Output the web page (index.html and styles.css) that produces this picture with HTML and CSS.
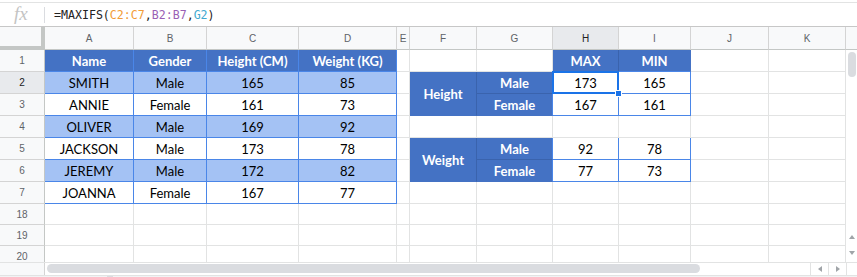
FILE: index.html
```html
<!DOCTYPE html>
<html lang="en">
<head>
  <meta charset="UTF-8">
  <title>MAXIFS</title>
  <link rel="stylesheet" href="styles.css">
</head>
<body>
  <!-- Barra de fórmula -->
  <div class="formula-bar">
    <span class="fx">fx</span>
    <span class="fx-sep"></span>
    <span class="formula">=MAXIFS(<span class="ref-c">C2:C7</span>,<span class="ref-b">B2:B7</span>,<span class="ref-g">G2</span>)</span>
  </div>

  <div class="sheet">
    <!-- Cabeçalhos das colunas -->
    <div class="corner"></div>
    <div class="hd">A</div>
    <div class="hd">B</div>
    <div class="hd">C</div>
    <div class="hd">D</div>
    <div class="hd">E</div>
    <div class="hd">F</div>
    <div class="hd">G</div>
    <div class="hd active">H</div>
    <div class="hd">I</div>
    <div class="hd">J</div>
    <div class="hd">K</div>
    <div class="hd sb-head"></div>

    <!-- Barra de rolagem vertical -->
    <div class="vscroll">
      <div class="vthumb"></div>
      <div class="varrows">
        <div class="varrow"><span class="tri-up"></span></div>
        <div class="varrow"><span class="tri-down"></span></div>
      </div>
    </div>

    <!-- Linha 1 -->
    <div class="rh">1</div>
    <div class="cell t1 head">Name</div>
    <div class="cell t1 head">Gender</div>
    <div class="cell t1 head">Height (CM)</div>
    <div class="cell t1 head">Weight (KG)</div>
    <div class="cell"></div>
    <div class="cell"></div>
    <div class="cell"></div>
    <div class="cell t2 head h-max">MAX</div>
    <div class="cell t2 head h-min">MIN</div>
    <div class="cell"></div>
    <div class="cell"></div>

    <!-- Linha 2 -->
    <div class="rh active">2</div>
    <div class="cell t1 alt">SMITH</div>
    <div class="cell t1 alt">Male</div>
    <div class="cell t1 alt">165</div>
    <div class="cell t1 alt">85</div>
    <div class="cell"></div>
    <div class="cell t2 head side">Height</div>
    <div class="cell t2 head sub-top">Male</div>
    <div class="cell t2 val selected">173<span class="sel"></span><span class="handle"></span></div>
    <div class="cell t2 val">165</div>
    <div class="cell"></div>
    <div class="cell"></div>

    <!-- Linha 3 -->
    <div class="rh">3</div>
    <div class="cell t1">ANNIE</div>
    <div class="cell t1">Female</div>
    <div class="cell t1">161</div>
    <div class="cell t1">73</div>
    <div class="cell"></div>
    <div class="cell t2 head sub-bottom">Female</div>
    <div class="cell t2 val">167</div>
    <div class="cell t2 val">161</div>
    <div class="cell"></div>
    <div class="cell"></div>

    <!-- Linha 4 -->
    <div class="rh">4</div>
    <div class="cell t1 alt">OLIVER</div>
    <div class="cell t1 alt">Male</div>
    <div class="cell t1 alt">169</div>
    <div class="cell t1 alt">92</div>
    <div class="cell"></div>
    <div class="cell"></div>
    <div class="cell"></div>
    <div class="cell"></div>
    <div class="cell"></div>
    <div class="cell"></div>
    <div class="cell"></div>

    <!-- Linha 5 -->
    <div class="rh">5</div>
    <div class="cell t1">JACKSON</div>
    <div class="cell t1">Male</div>
    <div class="cell t1">173</div>
    <div class="cell t1">78</div>
    <div class="cell"></div>
    <div class="cell t2 head side">Weight</div>
    <div class="cell t2 head sub-top">Male</div>
    <div class="cell t2 val">92</div>
    <div class="cell t2 val">78</div>
    <div class="cell"></div>
    <div class="cell"></div>

    <!-- Linha 6 -->
    <div class="rh">6</div>
    <div class="cell t1 alt">JEREMY</div>
    <div class="cell t1 alt">Male</div>
    <div class="cell t1 alt">172</div>
    <div class="cell t1 alt">82</div>
    <div class="cell"></div>
    <div class="cell t2 head sub-bottom">Female</div>
    <div class="cell t2 val">77</div>
    <div class="cell t2 val">73</div>
    <div class="cell"></div>
    <div class="cell"></div>

    <!-- Linha 7 -->
    <div class="rh">7</div>
    <div class="cell t1">JOANNA</div>
    <div class="cell t1">Female</div>
    <div class="cell t1">167</div>
    <div class="cell t1">77</div>
    <div class="cell"></div>
    <div class="cell"></div>
    <div class="cell"></div>
    <div class="cell"></div>
    <div class="cell"></div>
    <div class="cell"></div>
    <div class="cell"></div>

    <!-- Linhas 18 a 20 -->
    <div class="rh">18</div>
    <div class="cell"></div><div class="cell"></div><div class="cell"></div><div class="cell"></div>
    <div class="cell"></div><div class="cell"></div><div class="cell"></div><div class="cell"></div>
    <div class="cell"></div><div class="cell"></div><div class="cell"></div>

    <div class="rh">19</div>
    <div class="cell"></div><div class="cell"></div><div class="cell"></div><div class="cell"></div>
    <div class="cell"></div><div class="cell"></div><div class="cell"></div><div class="cell"></div>
    <div class="cell"></div><div class="cell"></div><div class="cell"></div>

    <div class="rh last">20</div>
    <div class="cell last"></div><div class="cell last"></div><div class="cell last"></div><div class="cell last"></div>
    <div class="cell last"></div><div class="cell last"></div><div class="cell last"></div><div class="cell last"></div>
    <div class="cell last"></div><div class="cell last"></div><div class="cell last"></div>
  </div>

  <!-- Barra de rolagem horizontal -->
  <div class="hscroll">
    <div class="hs-left"></div>
    <div class="hs-track"><div class="hthumb"></div></div>
    <div class="hs-btn"><span class="tri-left"></span></div>
    <div class="hs-btn"><span class="tri-right"></span></div>
    <div class="hs-corner"></div>
  </div>

  <div class="tabs-strip">
    <span class="tab-a"></span><span class="tab-b"></span><span class="tab-c"></span>
  </div>
</body>
</html>
```

FILE: styles.css
```css
/* Layout geral */
body {
  margin: 0;
  background: #fff;
  font-family: Lato, "Liberation Sans", sans-serif;
  overflow: hidden;
}

/* Barra de fórmula */
.formula-bar {
  margin-top: 2px;
  height: 23px;
  border-top: 1px solid #e2e3e3;
  border-bottom: 1px solid #c7c7c7;
  display: flex;
  align-items: center;
}

.fx {
  width: 44px;
  padding-left: 14px;
  box-sizing: border-box;
  font-family: "Liberation Serif", serif;
  font-style: italic;
  font-size: 19px;
  color: #c4c4c4;
  line-height: 1;
  margin-top: -2px;
}

.fx-sep {
  width: 1px;
  height: 16px;
  background: #dadce0;
  margin-right: 9px;
}

.formula {
  font-family: "DejaVu Sans Mono", monospace;
  font-size: 11.6px;
  color: #222;
}

.ref-c { color: #f29c36; }
.ref-b { color: #9a5fb5; }
.ref-g { color: #3fa9d0; }

/* Grade da planilha */
.sheet {
  display: grid;
  grid-template-columns: 45px 89px 73px 92px 98px 13px 67px 76px 66px 72px 78px 77px 11px;
  grid-template-rows: 23px repeat(7, 22px) 21px 21px 16px;
  overflow: hidden;
}

.sheet > div {
  box-sizing: border-box;
}

.corner {
  background: #f8f9fa;
  border-right: 4px solid #c4c7c5;
  border-bottom: 4px solid #c4c7c5;
}

.hd {
  background: #f8f9fa;
  border-right: 1px solid #d4d4d4;
  border-bottom: 1px solid #c4c7c5;
  font-family: "Liberation Sans", Arial, sans-serif;
  font-size: 10px;
  color: #5f6368;
  text-align: center;
  padding-top: 1px;
  line-height: 21px;
}

.hd.active {
  background: #e8eaed;
  color: #202124;
}

.sb-head {
  border-right: none;
}

.rh {
  background: #f8f9fa;
  border-right: 1px solid #c4c7c5;
  border-bottom: 1px solid #d4d4d4;
  font-family: "Liberation Sans", Arial, sans-serif;
  font-size: 10px;
  color: #5f6368;
  text-align: center;
  padding-top: 1px;
  line-height: 20px;
}

.rh.active {
  background: #e8eaed;
  color: #202124;
}

.cell {
  border-right: 1px solid #e2e3e3;
  border-bottom: 1px solid #e2e3e3;
  font-size: 13px;
  color: #000;
  text-align: center;
  padding-top: 2px;
  line-height: 19px;
  white-space: nowrap;
}

.rh.last, .cell.last {
  border-bottom: none;
}

/* Tabela de dados (A1:D7) */
.t1 {
  border-color: #4a86e8;
}

.head {
  background: #4472c4;
  color: #fff;
  font-weight: bold;
}

.alt {
  background: #a4c2f4;
}

/* Tabela de resumo (F1:I6) */
.h-max {
  border-right-color: #3a63ad;
  border-bottom-color: #4a86e8;
}

.h-min {
  border-right-color: #4472c4;
  border-bottom-color: #4a86e8;
}

.side {
  grid-row: span 2;
  border-right-color: #3a63ad;
  border-bottom-color: #4472c4;
  line-height: 41px;
}

.sub-top {
  border-right-color: #4a86e8;
  border-bottom-color: #3a63ad;
}

.sub-bottom {
  border-right-color: #4a86e8;
  border-bottom-color: #4472c4;
}

.val {
  border-color: #4a86e8;
}

/* Célula selecionada */
.selected {
  position: relative;
}

.sel {
  position: absolute;
  top: -1px;
  left: -1px;
  right: -1px;
  bottom: -1px;
  border: 2px solid #1a73e8;
}

.handle {
  position: absolute;
  right: -4px;
  bottom: -4px;
  width: 5px;
  height: 5px;
  background: #1a73e8;
  border: 1px solid #fff;
}

/* Barra de rolagem vertical */
.vscroll {
  grid-column: 13;
  grid-row: 2 / -1;
  display: flex;
  flex-direction: column;
  justify-content: space-between;
  background: #fff;
}

.vthumb {
  width: 8px;
  height: 25px;
  margin: 2px 0 0 2px;
  border-radius: 4px;
  background: #dadce0;
}

.varrows {
  margin-bottom: 1px;
}

.varrow {
  height: 16px;
  display: flex;
  align-items: center;
  justify-content: center;
}

.tri-up, .tri-down, .tri-left, .tri-right {
  width: 0;
  height: 0;
  border: 3px solid transparent;
}

.tri-up { border-bottom: 4px solid #a0a4a8; border-top: none; }
.tri-down { border-top: 4px solid #a0a4a8; border-bottom: none; }
.tri-left { border-right: 4px solid #a0a4a8; border-left: none; }
.tri-right { border-left: 4px solid #a0a4a8; border-right: none; }

/* Barra de rolagem horizontal */
.hscroll {
  display: flex;
  height: 12px;
  border-top: 1px solid #e2e3e3;
}

.hs-left {
  width: 45px;
  box-sizing: border-box;
  background: #f8f9fa;
  border-right: 1px solid #d4d4d4;
}

.hs-track {
  flex: 1;
}

.hthumb {
  width: 653px;
  height: 9px;
  margin: 1px 0 0 2px;
  border-radius: 5px;
  background: #dadce0;
}

.hs-btn {
  width: 17px;
  border-left: 1px solid #e2e3e3;
  display: flex;
  align-items: center;
  justify-content: center;
}

.hs-corner {
  width: 10px;
  border-left: 1px solid #e2e3e3;
}

/* Faixa das abas */
.tabs-strip {
  display: flex;
  height: 3px;
  background: #f1f3f4;
  border-top: 1px solid #e2e3e3;
}

.tab-a { width: 107px; }
.tab-b { width: 6px; background: #dadce0; }
.tab-c { width: 600px; }
```
